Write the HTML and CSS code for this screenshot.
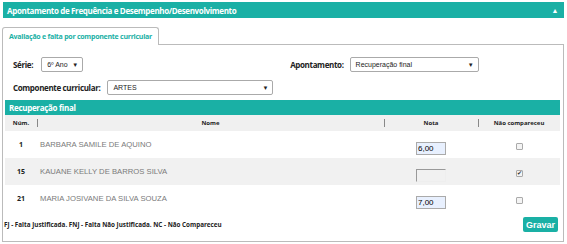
FILE: index.html
```html
<!DOCTYPE html>
<html lang="pt-BR">

<head>
    <meta charset="UTF-8" />
    <title>Apontamento de Frequência</title>
    <link rel="stylesheet" href="styles.css">
</head>

<body>
    <div class="box-header">
        <span>Apontamento de Frequência e Desempenho/Desenvolvimento</span>
        <span class="arrow">▲</span>
    </div>

    <div class="tabs">
        <div class="tab">Avaliação e falta por componente curricular</div>
    </div>

    <div class="panel">
        <div class="filters">
            <div class="filter-row">
                <div class="field">
                    <label>Série:</label>
                    <div class="select sel-serie">6º Ano <span class="caret">▼</span></div>
                </div>
                <div class="field field-right">
                    <label>Apontamento:</label>
                    <div class="select sel-apont">Recuperação final <span class="caret">▼</span></div>
                </div>
            </div>
            <div class="filter-row">
                <div class="field">
                    <label>Componente curricular:</label>
                    <div class="select sel-comp">ARTES <span class="caret">▼</span></div>
                </div>
            </div>
        </div>

        <div class="grid-title">Recuperação final</div>
        <table class="grid">
            <thead>
                <tr>
                    <th class="c-num">Núm.</th>
                    <th class="c-name">Nome</th>
                    <th class="c-nota">Nota</th>
                    <th class="c-nc">Não compareceu</th>
                </tr>
            </thead>
            <tbody>
                <tr>
                    <td class="c-num">1</td>
                    <td class="c-name">BARBARA SAMILE DE AQUINO</td>
                    <td class="c-nota"><input class="nota" type="text" value="6,00"></td>
                    <td class="c-nc"><input class="check" type="checkbox"></td>
                </tr>
                <tr class="alt">
                    <td class="c-num">15</td>
                    <td class="c-name">KAUANE KELLY DE BARROS SILVA</td>
                    <td class="c-nota"><input class="nota disabled" type="text" value="" disabled></td>
                    <td class="c-nc"><input class="check" type="checkbox" checked></td>
                </tr>
                <tr>
                    <td class="c-num">21</td>
                    <td class="c-name">MARIA JOSIVANE DA SILVA SOUZA</td>
                    <td class="c-nota"><input class="nota" type="text" value="7,00"></td>
                    <td class="c-nc"><input class="check" type="checkbox"></td>
                </tr>
            </tbody>
        </table>

        <div class="footer">
            <span class="legend">FJ - Falta Justificada. FNJ - Falta Não Justificada. NC - Não Compareceu</span>
            <button class="btn-save">Gravar</button>
        </div>
    </div>
</body>

</html>
```

FILE: styles.css
```css
body {
    margin: 0;
    padding: 2px 3px 0 2px;
    background: #fff;
    font-family: "Open Sans", sans-serif;
    color: #333;
}

.box-header {
    display: flex;
    justify-content: space-between;
    align-items: center;
    height: 16px;
    margin-left: 1px;
    padding: 0 6px 0 4px;
    background-color: #1ab0a5;
    color: #fff;
    font-size: 8px;
    font-weight: bold;
    letter-spacing: -0.35px;
}

.arrow {
    font-size: 7px;
}

.tabs {
    display: flex;
    margin-top: 8px;
}

.tab {
    width: 149px;
    height: 17px;
    padding-left: 6px;
    line-height: 17px;
    white-space: nowrap;
    border: 1px solid #bbb;
    border-bottom: none;
    border-radius: 3px 3px 0 0;
    background: #fff;
    color: #1ab0a5;
    font-size: 7px;
    font-weight: bold;
    letter-spacing: -0.25px;
    position: relative;
    top: 1px;
}

.panel {
    border: 1px solid #bbb;
    padding: 0 3px 0 2px;
    height: 196px;
}

.filters {
    padding: 12px 0 5px 8px;
}

.filter-row {
    display: flex;
    align-items: center;
    height: 15px;
}

.filter-row + .filter-row {
    margin-top: 8px;
}

.field {
    display: flex;
    align-items: center;
}

.field-right {
    margin-left: 207px;
}

.field label {
    font-size: 8px;
    font-weight: bold;
    color: #222;
    letter-spacing: -0.35px;
    white-space: nowrap;
}

.select {
    display: flex;
    justify-content: space-between;
    align-items: center;
    height: 13px;
    padding: 0 4px 0 5px;
    border: 1px solid #aaa;
    border-radius: 2px;
    background: #fff;
    font-family: "Liberation Sans", Arial, sans-serif;
    font-size: 7px;
    color: #222;
}

.caret {
    font-size: 6px;
}

.sel-serie {
    width: 31px;
    margin-left: 8px;
}

.sel-apont {
    width: 118px;
    margin-left: 6px;
}

.sel-comp {
    width: 155px;
    margin-left: 7px;
}

.grid-title {
    height: 15px;
    line-height: 15px;
    padding-left: 4px;
    background-color: #1ab0a5;
    color: #fff;
    font-size: 8px;
    font-weight: bold;
    letter-spacing: -0.3px;
}

.grid {
    width: 100%;
    border-collapse: collapse;
}

.grid th {
    height: 16px;
    padding: 0;
    background: #f0f0f0;
    font-size: 6px;
    font-weight: bold;
    color: #222;
    text-align: center;
    position: relative;
}

.grid th + th::before {
    content: "";
    position: absolute;
    left: 0;
    top: 4px;
    height: 8px;
    border-left: 1px solid #888;
}

.grid td {
    height: 27px;
    padding: 0;
    text-align: center;
}

.grid tr.alt td {
    background: #f1f1f1;
}

.c-num {
    width: 32px;
    font-size: 7px;
    font-weight: bold;
    color: #222;
}

.grid td.c-name {
    text-align: left;
    padding-left: 3px;
    font-family: "Liberation Sans", Arial, sans-serif;
    font-size: 7.7px;
    color: #7a7a7a;
}

.c-nota {
    width: 94px;
}

.c-nc {
    width: 82px;
}

.nota {
    box-sizing: border-box;
    width: 30px;
    height: 13px;
    padding: 0 1px;
    border: 1px solid #aaa;
    background: #e8f0fe;
    font-family: "Liberation Sans", Arial, sans-serif;
    font-size: 8px;
    color: #000;
}

.nota.disabled {
    background: #f1f1f1;
    border-color: #999 #eee #eee #999;
}

.check {
    appearance: none;
    box-sizing: border-box;
    width: 7px;
    height: 7px;
    margin: 0;
    border: 1px solid #aaa;
    border-radius: 1px;
    background: #f4f4f4;
    position: relative;
    vertical-align: middle;
}

.check:checked::after {
    content: "✔";
    position: absolute;
    left: 0;
    top: -2px;
    font-size: 6px;
    color: #333;
}

.footer {
    display: flex;
    justify-content: space-between;
    align-items: center;
    padding: 5px 2px 0 0;
}

.legend {
    font-size: 6.3px;
    font-weight: bold;
    color: #222;
    margin-left: -1px;
}

.btn-save {
    height: 15px;
    padding: 0 3px;
    border: none;
    border-radius: 2px;
    background-color: #1ab0a5;
    color: #fff;
    font-family: "Liberation Sans", Arial, sans-serif;
    font-size: 9px;
    font-weight: bold;
    cursor: pointer;
}
```
